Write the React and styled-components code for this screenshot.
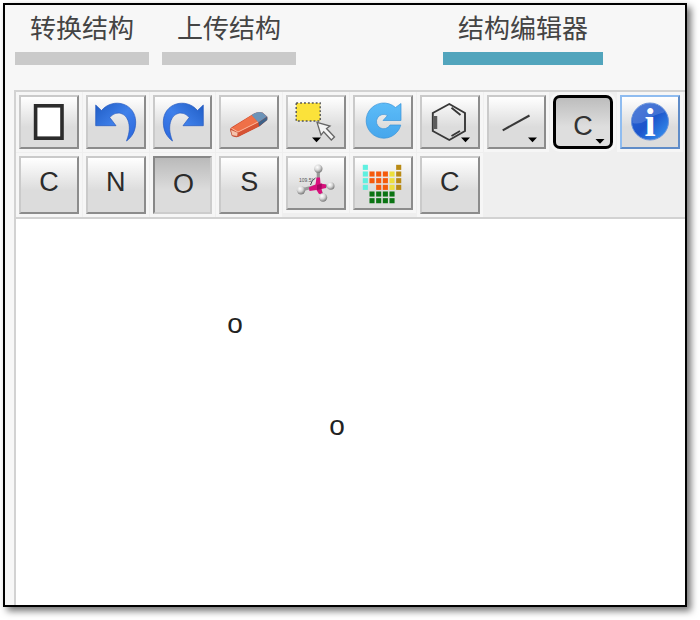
import * as React from 'react'
import styled, {createGlobalStyle, css} from 'styled-components'

const TABS = [
  {id: 'convert', title: '转换结构'},
  {id: 'upload', title: '上传结构'},
  {id: 'editor', title: '结构编辑器'}
]

const ATOMS = [
  {id: 1, symbol: 'o', x: 219, y: 105},
  {id: 2, symbol: 'o', x: 321, y: 207}
]

// cells of the periodic table icon: column, first row, last row, color
const TABLE_COLUMNS = [
  [0, 0, 3, '#5ff0e0'],
  [1, 1, 2, '#f55a0c'],
  [2, 1, 3, '#f55a0c'],
  [3, 1, 3, '#f55a0c'],
  [4, 1, 3, '#ecdf3c'],
  [5, 0, 3, '#b98a14'],
  [1, 4, 5, '#0b7414'],
  [2, 4, 5, '#0b7414'],
  [3, 4, 5, '#0b7414'],
  [4, 4, 5, '#0b7414']
]

function Icon ({children}) {
  return <Glyph viewBox='2 2 56 50' aria-hidden='true'>{children}</Glyph>
}

function MenuArrow ({x, y = 42.5}) {
  return <path d={`M${x - 4.5} ${y}h9l-4.5 4.8z`} fill='#000' />
}

function PageIcon () {
  return (
    <Icon>
      <rect x='16.6' y='10.8' width='26.4' height='32.4' fill='#fff' stroke='#2b2b2b' strokeWidth='3.6' />
    </Icon>
  )
}

function TurnIcon ({id, flip}) {
  return (
    <Icon>
      <defs>
        <linearGradient id={id} x1='0' y1='0' x2='1' y2='1'>
          <stop offset='0' stopColor='#1f5cc4' />
          <stop offset='0.5' stopColor='#3f80ea' />
          <stop offset='1' stopColor='#2a66dc' />
        </linearGradient>
      </defs>
      <path
        transform={flip ? 'translate(60 0) scale(-1 1)' : undefined}
        d='M9.7 10L15.5 15.5C27 2 49.5 8 49.7 27C49.7 36 46 42 40.5 46C44 37 44 31 42 25.5C38.5 16.5 29 16 23.8 22.5L30 30.7H9.7Z'
        fill={`url(#${id})`}
        stroke='#2459c0'
        strokeWidth='0.7'
      />
    </Icon>
  )
}

function EraserIcon () {
  return (
    <Icon>
      <path d='M11 34.5Q11 33 13 32L35 18.5Q39 16.5 43.5 17.5L48 21.5Q49 24 47.5 25.5L41 31L20 41.5Q17 43 13 41Z' fill='#c9452a' />
      <path d='M12 33.5L33 20L39.5 27.5L19 37.5Z' fill='#ef7048' />
      <path d='M11.5 34.5L19 37.5L18.5 41.5L13 40.5Z' fill='#f6c3ac' stroke='#bd4b30' strokeWidth='0.6' />
      <path d='M19 37.5L39.5 27.5V31.5L19 41.5Z' fill='#d65334' />
      <path d='M32.5 20L36 18Q40 16.5 43.5 17.5L48 21.5L39.5 27.5Z' fill='#6c93b8' />
      <path d='M39.5 27.5L48.3 21.5V25L40 31.5Z' fill='#3d6288' />
      <path d='M12.5 33.3L19 37L39 27' fill='none' stroke='#fbb79c' strokeWidth='1' />
    </Icon>
  )
}

function SelectIcon () {
  return (
    <Icon>
      <rect x='10.2' y='8' width='24' height='18' fill='#fbe23a' />
      <rect x='10.2' y='8' width='24' height='18' fill='none' stroke='#555' strokeWidth='1.4' strokeDasharray='1.9 2' />
      <path d='M31 27.3L44 31L40.5 33.5L48.5 42L45.3 45L37.7 36.7L35 40.2Z' fill='#f4f4f4' stroke='#666' strokeWidth='1.3' />
      <MenuArrow x={30.5} />
    </Icon>
  )
}

function RefreshIcon () {
  return (
    <Icon>
      <defs>
        <linearGradient id='refresh' x1='0' y1='0' x2='0' y2='1'>
          <stop offset='0' stopColor='#5cbcf8' />
          <stop offset='1' stopColor='#46a6ec' />
        </linearGradient>
      </defs>
      <path
        d='M48 8.5L42.5 12.5A17.6 17.6 0 1 0 47.8 30H37A7.2 7.2 0 1 1 34.5 20.5L30 25.5H48Z'
        fill='url(#refresh)'
        stroke='#3b93d8'
        strokeWidth='0.7'
      />
    </Icon>
  )
}

function BenzeneIcon () {
  return (
    <Icon>
      <path
        d='M29.3 9L45 18V36L29.3 45L12.8 36V18ZM31.5 12.8L40.5 20M31.5 41L40 36'
        fill='none'
        stroke='#383838'
        strokeWidth='1.9'
      />
      <path d='M15.5 21V34' stroke='#5c5c5c' strokeWidth='3.5' />
      <MenuArrow x={45.5} />
    </Icon>
  )
}

function BondIcon () {
  return (
    <Icon>
      <path d='M15.7 35.3L42.5 20.5' stroke='#383838' strokeWidth='2.1' />
      <MenuArrow x={45.5} />
    </Icon>
  )
}

function CarbonIcon () {
  return (
    <Icon>
      <IconText x='30' y='40'>C</IconText>
      <MenuArrow x={47} y={44} />
    </Icon>
  )
}

function InfoIcon () {
  return (
    <Icon>
      <defs>
        <linearGradient id='info' x1='0' y1='0' x2='1' y2='1'>
          <stop offset='0' stopColor='#2c63d2' />
          <stop offset='0.5' stopColor='#1c55cb' />
          <stop offset='1' stopColor='#3a9af4' />
        </linearGradient>
      </defs>
      <circle cx='30' cy='26.5' r='18.5' fill='url(#info)' stroke='#6a94dc' strokeWidth='1' />
      <path d='M12.5 28A17.5 17.5 0 0 1 45 17Q33 20 27 25Q20 30 12.5 28Z' fill='#fff' opacity='0.16' />
      <InfoText x='30' y='41'>i</InfoText>
    </Icon>
  )
}

function MoleculeIcon () {
  return (
    <Icon>
      <defs>
        <radialGradient id='ball' cx='0.38' cy='0.32' r='0.7'>
          <stop offset='0' stopColor='#fff' />
          <stop offset='0.5' stopColor='#d6d6d6' />
          <stop offset='1' stopColor='#777' />
        </radialGradient>
      </defs>
      <path d='M32.3 15V29M17 33.5L31 30M43 30L32 30M36.5 40L32 30' stroke='#999' strokeWidth='3.2' />
      <path d='M30.5 21.5H34L34.5 27.5L40 28.5V32L35.5 33L36.5 37.5L33 38L30.5 34L23.5 35L22.8 31.5L29.5 28.5Z' fill='#d8107c' />
      <path d='M31 29L36 27.5L35.5 33L31 34Z' fill='#a80862' />
      <path d='M24.5 29Q25.5 24 29.5 22' fill='none' stroke='#444' strokeWidth='1' />
      <TinyText x='13' y='26'>109.5°</TinyText>
      <circle cx='32.3' cy='12.7' r='4.2' fill='url(#ball)' />
      <circle cx='15' cy='34.2' r='4.2' fill='url(#ball)' />
      <circle cx='44.7' cy='30' r='3.8' fill='url(#ball)' />
      <circle cx='37' cy='41.5' r='4.2' fill='url(#ball)' />
    </Icon>
  )
}

function TableIcon () {
  return (
    <Icon>
      {TABLE_COLUMNS.map(([column, from, to, color]) => (
        Array.from({length: to - from + 1}, (_, i) => (
          <rect
            key={`${column}-${from + i}`}
            x={9.8 + column * 6.67}
            y={8.8 + (from + i) * 6.67}
            width='5.1'
            height='5.1'
            fill={color}
          />
        ))
      ))}
    </Icon>
  )
}

export default function App () {
  const [tab, setTab] = React.useState('editor')
  const [element, setElement] = React.useState('O')

  return (
    <Page>
      <GlobalStyle />
      <Frame>
        <Tabs>
          {TABS.map(({id, title}) => (
            <Tab key={id} type='button' $active={tab === id} onClick={() => setTab(id)}>
              {title}
            </Tab>
          ))}
        </Tabs>
        <Editor>
          <Toolbar role='toolbar' aria-label='结构编辑器'>
            <Tool type='button' aria-label='New'><PageIcon /></Tool>
            <Tool type='button' aria-label='Undo'><TurnIcon id='undo' /></Tool>
            <Tool type='button' aria-label='Redo'><TurnIcon id='redo' flip /></Tool>
            <Tool type='button' aria-label='Erase'><EraserIcon /></Tool>
            <Tool type='button' aria-label='Select'><SelectIcon /></Tool>
            <Tool type='button' aria-label='Refresh'><RefreshIcon /></Tool>
            <Tool type='button' aria-label='Ring'><BenzeneIcon /></Tool>
            <Tool type='button' aria-label='Bond'><BondIcon /></Tool>
            <Tool type='button' aria-label='Atom' $variant='selected'><CarbonIcon /></Tool>
            <Tool type='button' aria-label='Info' $variant='info'><InfoIcon /></Tool>
            {['C', 'N', 'O', 'S'].map(symbol => (
              <ElementTool
                key={symbol}
                type='button'
                $variant={element === symbol ? 'pressed' : undefined}
                onClick={() => setElement(symbol)}
              >
                {symbol}
              </ElementTool>
            ))}
            <Tool type='button' aria-label='Geometry'><MoleculeIcon /></Tool>
            <Tool type='button' aria-label='Periodic table'><TableIcon /></Tool>
            <ElementTool type='button'>C</ElementTool>
          </Toolbar>
          <Canvas>
            {ATOMS.map(({id, symbol, x, y}) => (
              <Atom key={id} $x={x} $y={y}>{symbol}</Atom>
            ))}
          </Canvas>
        </Editor>
      </Frame>
    </Page>
  )
}

const GlobalStyle = createGlobalStyle`
  * {box-sizing: border-box;}
  body {
    margin: 0;
    background: white;
    font-family: 'Liberation Sans', 'Noto Sans CJK SC', sans-serif;
  }
`

const Page = styled.div`
  display: flex;
  min-height: 100vh;
  padding: 3px 13px 13px 3px;
`

const Frame = styled.main`
  display: flex;
  flex: 1;
  flex-direction: column;
  min-width: 0;
  border: 2px solid black;
  background: #f7f7f7;
  box-shadow: 4px 4px 7px rgba(0, 0, 0, 0.55);
`

const Tabs = styled.nav`
  display: flex;
  gap: 13px;
  padding: 0 82px 0 10px;
`

const Tab = styled.button`
  padding: 2px 15px 5px;
  border: 0;
  border-bottom: 13px solid ${p => p.$active ? '#52a5bd' : '#cacaca'};
  background: none;
  color: #444;
  font-family: 'Noto Sans CJK SC', sans-serif;
  font-size: 26px;
  line-height: 40px;
  white-space: nowrap;
  cursor: pointer;

  &:last-child {margin-left: auto;}
`

const Editor = styled.section`
  display: flex;
  flex: 1;
  flex-direction: column;
  margin: 25px 0 0 9px;
  border-top: 2px solid #d2d2d2;
  border-left: 2px solid #d2d2d2;
`

const Toolbar = styled.div`
  display: grid;
  grid-template-columns: repeat(10, minmax(0, 1fr));
  align-items: start;
  gap: 7px;
  padding: 3px 5px 3px 3px;
  border-bottom: 2px solid #d2d2d2;
  background: #efefef;
`

const variants = {
  selected: css`
    border: 3px solid black;
    border-radius: 7px;
    background: linear-gradient(#bdbdbd, #dedede 60%);
  `,
  info: css`
    border-color: #8fbcf0 #5f8cc8 #5f8cc8 #8fbcf0;
  `,
  pressed: css`
    border-color: #888 #ccc #ccc #888;
    background: linear-gradient(#bababa, #dcdcdc 60%);
    padding: 2px 0 0 2px;
  `
}

const Tool = styled.button`
  display: flex;
  align-items: center;
  justify-content: center;
  height: 54px;
  padding: 0;
  border: 2px solid;
  border-color: #cacaca #8c8c8c #8c8c8c #cacaca;
  background: linear-gradient(#fff, #dcdcdc 60%);
  box-shadow: 0 0 0 3px #f6f6f6;
  color: #2b2b2b;
  cursor: pointer;

  ${p => variants[p.$variant]}
`

const ElementTool = styled(Tool)`
  height: 58px;
  padding-bottom: ${p => p.$variant === 'pressed' ? 4 : 6}px;
  font-family: 'Liberation Sans', sans-serif;
  font-size: 27px;
  line-height: 32px;
`

const Glyph = styled.svg`
  display: block;
  flex: none;
  width: 56px;
  height: 50px;
`

const IconText = styled.text`
  fill: #333;
  font-family: 'Liberation Sans', sans-serif;
  font-size: 27px;
  text-anchor: middle;
`

const InfoText = styled.text`
  fill: white;
  font-family: 'Liberation Serif', serif;
  font-size: 40px;
  font-weight: bold;
  text-anchor: middle;
`

const TinyText = styled.text`
  fill: #555;
  font-family: 'Liberation Sans', sans-serif;
  font-size: 5px;
`

const Canvas = styled.div`
  position: relative;
  flex: 1;
  min-height: 240px;
  background: white;
`

const Atom = styled.span`
  position: absolute;
  left: ${p => p.$x}px;
  top: ${p => p.$y}px;
  color: #222;
  font-size: 28px;
  line-height: 32px;
  transform: translate(-50%, -50%);
`
